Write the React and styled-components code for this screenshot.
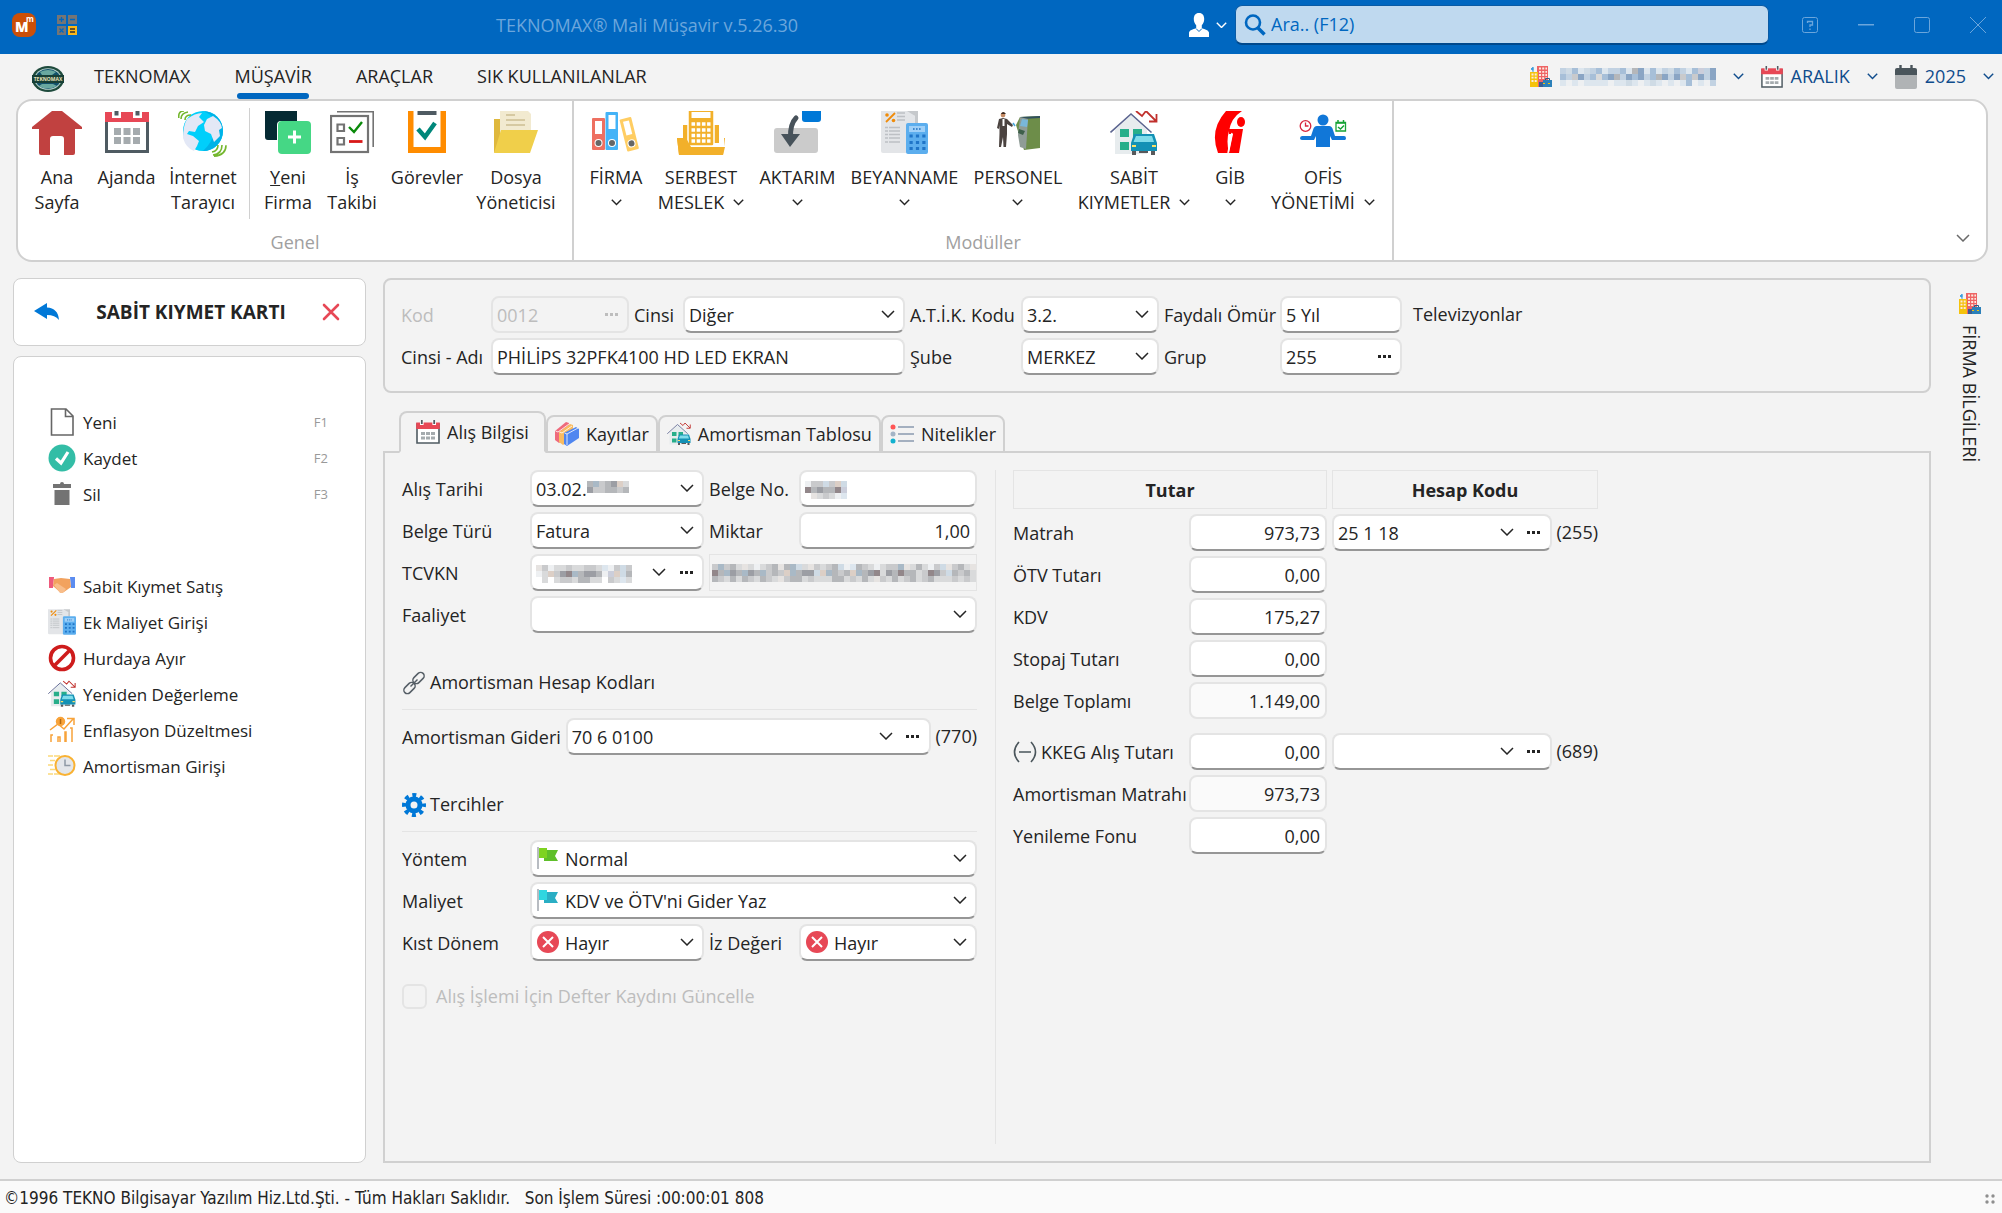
import React, { useState } from "react";
import styled, { createGlobalStyle, css } from "styled-components";

const color = {
    blue: "#0067c0",
    navy: "#0f4c8c",
    text: "#242424",
    muted: "#a0a0a0",
    disabled: "#bdbdbd",
    border: "#d0d0d0",
    soft: "#e4e4e4",
    bg: "#f3f3f3",
    white: "#ffffff",
    red: "#e74856",
};

const GlobalStyle = createGlobalStyle`
    * {
        box-sizing: border-box;
    }

    body {
        margin: 0;
        background: ${color.bg};
        color: ${color.text};
        font-family: "Open Sans", "Noto Sans", sans-serif;
        font-size: 18px;
        line-height: 25px;
    }

    button, input, select {
        margin: 0;
        padding: 0;
        border: none;
        background: none;
        color: inherit;
        font: inherit;
    }

    svg {
        display: block;
        flex: none;
    }
`;

/* ---------- icons ---------- */

const Chevron = ({ w = 14 }) => (
    <svg width={w} height={w * 0.6} viewBox="0 0 14 8.4" fill="none" stroke="currentColor" strokeWidth={w > 12 ? 1.5 : 1.8}>
        <path d="M1 1l6 6 6-6" />
    </svg>
);

const Dots = () => (
    <svg width="14" height="3" viewBox="0 0 14 3" fill="currentColor">
        <path d="M0 0h3v3H0zM5 0h3v3H5zM10 0h3v3h-3z" />
    </svg>
);

const AppLogo = () => (
    <svg width="24" height="24" viewBox="0 0 24 24">
        <rect width="24" height="24" rx="8" fill="#cb4f08" />
        <text x="3" y="19" fontSize="14" fontWeight="800" fill="#fff">M</text>
        <text x="14" y="9" fontSize="8" fontWeight="700" fill="#fff">m</text>
    </svg>
);

const CalcGrid = () => (
    <svg width="20" height="20" viewBox="0 0 20 20">
        <path fill="#757575" d="M0 0h9v9H0zM11 0h9v9h-9zM0 11h9v9H0z" />
        <path fill="#fbb616" d="M11 11h9v9h-9z" />
        <path stroke="#0067c0" strokeWidth="1.3" fill="none" d="M2 4.5h5M4.500 2v5M13 4.500h5M2.500 13.500l4 4M6.500 13.500l-4 4" />
        <path stroke="#333" strokeWidth="1.3" d="M13 14h5M13 17h5" />
    </svg>
);

const UserIcon = () => (
    <svg width="20" height="24" viewBox="0 0 20 24" fill="#fff">
        <path d="M10 0c3.600 0 5.200 2.600 5.200 6 0 2.600-1 5-2.400 6.200V15c1 1 6.200 1.200 7.200 4.500V24H0v-4.500C1 16.200 6.200 16 7.200 15v-2.800C5.800 11 4.800 8.600 4.800 6c0-3.400 1.600-6 5.200-6z" />
        <path d="M7 15.500l3 3 3-3" fill="none" stroke="#0067c0" strokeWidth="1" />
    </svg>
);

const SearchIcon = () => (
    <svg width="22" height="22" viewBox="0 0 22 22" fill="none" stroke="#0067c0">
        <circle cx="9" cy="8.500" r="7" strokeWidth="2.600" />
        <path d="M14 14l6.500 6.500" strokeWidth="3.600" />
    </svg>
);

const GlobeLogo = () => (
    <svg width="32" height="26" viewBox="0 0 32 26">
        <ellipse cx="16" cy="13" rx="16" ry="13" fill="#1e4a3c" />
        <ellipse cx="16" cy="13" rx="13.500" ry="10.800" fill="#b9d4cf" />
        <ellipse cx="16" cy="13" rx="12.500" ry="10" fill="#12516a" />
        <path d="M8 6q8-4 16 0l-4 3H10zM7 20q8 5 18 0l-4-2H10z" fill="#69a8a0" />
        <rect x="0" y="9" width="32" height="8" fill="#173f36" />
        <text x="16" y="15" fontSize="5" fontWeight="700" fill="#e8e2bc" textAnchor="middle">TEKNOMAX</text>
    </svg>
);

const BuildingIcon = () => (
    <svg width="22" height="22" viewBox="0 0 22 22">
        <path d="M7 0h11v21H7z" fill="#ee6465" />
        <path d="M0 6h8v15H0z" fill="#f5c20c" />
        <path d="M3 6V1M3 1.500l-2 1.500 2 1.200z" stroke="#3b9ddd" fill="#3b9ddd" />
        <path stroke="#fbe9df" strokeWidth="1.800" strokeDasharray="2 1.200" d="M9 2.500h8M9 5.800h8M9 9h8M9 12.200h8M1.500 8.500h6M1.500 11.700h6M1.500 15h6" />
        <path d="M9 16h4v5H9z" fill="#3a5e94" />
        <path d="M13 14h9v7h-9z" fill="#2c80b9" />
        <path d="M13 17.500h9" stroke="#f5c20c" strokeDasharray="2 3" />
        <path d="M15.500 14v-1.500h4V14" stroke="#275b84" fill="none" />
    </svg>
);

const CalendarIcon = ({ w = 24, h = 24 }) => (
    <svg width={w} height={h} viewBox="0 0 24 24">
        <path d="M1 4h22v19H1z" fill="#fff" stroke="#4f5b62" strokeWidth="1.600" />
        <path d="M.2 2.500h23.600V9H.2z" fill={color.red} />
        <path d="M4 0h3.600v5H4zM16.400 0H20v5h-3.600z" fill="#fff" />
        <path d="M5.800 0v4M18.200 0v4" stroke="#4f5b62" strokeWidth="1.800" />
        <path fill="#a5abae" d="M5 12h4v3H5zM10 12h4v3h-4zM15 12h4v3h-4zM5 16.500h4v3H5zM10 16.500h4v3h-4zM15 16.500h4v3h-4z" />
    </svg>
);

const AgendaIcon = () => (
    <svg width="44" height="44" viewBox="0 0 44 44">
        <path d="M1.500 6h41v34.500h-41z" fill="#fff" stroke="#4f5b62" strokeWidth="3" />
        <path d="M0 1h44v10H0z" fill={color.red} />
        <path d="M7 0h9v7H7zM28 0h9v7h-9z" fill="#fff" />
        <path d="M11.500 0v4.500M32.500 0v4.500" stroke="#4f5b62" strokeWidth="4" />
        <path fill="#a5abae" d="M9 17h7v7H9zM18.500 17h7v7h-7zM28 17h7v7h-7zM9 26h7v7H9zM18.500 26h7v7h-7zM28 26h7v7h-7z" />
    </svg>
);

const DarkCalendarIcon = () => (
    <svg width="22" height="24" viewBox="0 0 22 24">
        <rect y="4" width="22" height="20" rx="2" fill="#b0b3b5" />
        <path d="M0 10V5q0-2 2-2h18q2 0 2 2v5z" fill="#4a555b" />
        <path d="M5.500 0v5M16.500 0v5" stroke="#4a555b" strokeWidth="2.400" />
    </svg>
);

const HomeIcon = () => (
    <svg width="50" height="44" viewBox="0 0 50 44">
        <path d="M20 0h10l20 16v2h-7v24q0 2-2 2h-9V28q0-3-3-3h-8q-3 0-3 3v16H9q-2 0-2-2V18H0v-2z" fill="#c14140" />
    </svg>
);

const InternetIcon = () => (
    <svg width="50" height="46" viewBox="0 0 50 46">
        <circle cx="25" cy="20" r="20" fill="#00cffb" />
        <path d="M25 0a20 20 0 0 1 0 40q10-9 12-22T25 0z" fill="#00b3e8" />
        <path
            d="M9 8q8-6 15-6l-3 4 5 5-6 4-3 6-6-1-2 3 6 2 6 5-2 5-3 5q-8-3-11-13 0-12 4-19zM29 8l6-3q8 5 9 12l-3 2 1 6-6 6-3-8-6-3-1-6z"
            fill="#e3e8f6"
        />
        <g fill="none" stroke="#74b72e" strokeWidth="1.600">
            <path d="M10 1q-7 1-7 7M6 0Q0 0 .8 7M13 4q-6 0-6 5" />
            <path d="M34 41q6-1 6-7M35 44q9-1 9-10M36 45.200q12-1 12-11" />
        </g>
    </svg>
);

const NewFirmIcon = () => (
    <svg width="46" height="44" viewBox="0 0 46 44">
        <path d="M0 0h32v10H16q-4 0-4 4v15H3q-3 0-3-3z" fill="#052a33" />
        <rect x="13" y="10" width="33" height="33" rx="4" fill="#45d785" />
        <path d="M29.500 19.500v13M23 26h13" stroke="#fff" strokeWidth="3" />
    </svg>
);

const TasksIcon = () => (
    <svg width="44" height="44" viewBox="0 0 44 44" fill="none">
        <path d="M7 .8h36.200V36" stroke="#737373" strokeWidth="1.600" />
        <rect x="1" y="5" width="37" height="36" stroke="#737373" strokeWidth="2.200" />
        <path d="M7.500 13.500h6.500v6.500H7.500zM7.500 27h6.500v6.500H7.500z" stroke="#737373" strokeWidth="2.200" />
        <path d="M19 16l5 5 8-10" stroke="#0a8a0a" strokeWidth="2.400" />
        <path d="M19 30.500h13.500" stroke="#d81818" strokeWidth="2.800" />
    </svg>
);

const ClipboardIcon = () => (
    <svg width="38" height="44" viewBox="0 0 38 44">
        <path d="M0 0h38v42H0z" fill="#ff8c00" />
        <path d="M5.500 0h27v36h-27z" fill="#fff" />
        <path d="M9.500 0h19v4h-19z" fill="#4f5b62" />
        <path d="M10 18l7 8 10-14" fill="none" stroke="#00877a" strokeWidth="4.500" />
    </svg>
);

const FolderIcon = () => (
    <svg width="44" height="44" viewBox="0 0 44 44">
        <path d="M0 8h10v20L0 42z" fill="#dfb83d" />
        <path d="M6 0h28l3 3v28L6 34z" fill="#f2ead0" />
        <path d="M12 4h9M12 9h19M12 14h19" stroke="#d6c9a2" strokeWidth="1.800" />
        <path d="M7 19h37l-8 23H0z" fill="#f0cf4a" />
    </svg>
);

const BindersIcon = () => (
    <svg width="48" height="44" viewBox="0 0 48 44">
        <rect x="0" y="7" width="13" height="32" rx="1" fill="#ee7061" />
        <rect x="13.500" y="1" width="12.500" height="38" rx="1" fill="#44b3f7" />
        <g transform="rotate(-14 40 22)">
            <rect x="31" y="6" width="12" height="33" rx="1" fill="#ffcd62" />
            <rect x="34" y="9" width="6" height="14" fill="#fff" />
            <circle cx="37" cy="32" r="4" fill="#fff" />
            <circle cx="37" cy="32" r="3" fill="#666" />
        </g>
        <path d="M3 10h7v13H3zM16.500 4h7v14h-7z" fill="#fff" />
        <circle cx="6.500" cy="32" r="4" fill="#fff" />
        <circle cx="6.500" cy="32" r="3" fill="#666" />
        <circle cx="20" cy="32" r="4" fill="#fff" />
        <circle cx="20" cy="32" r="3" fill="#666" />
    </svg>
);

const CashIcon = () => (
    <svg width="48" height="44" viewBox="0 0 48 44">
        <path d="M6 14h36v18H6zM0 27h9l5 9h33V27h1l-2 17H2z" fill="#f2b02a" />
        <rect x="11" y="-3" width="26" height="38" rx="2" fill="#f2b02a" stroke="#fff" strokeWidth="1.500" />
        <path d="M14.500 1h19v6h-19z" fill="#fff" />
        <path stroke="#fff" strokeWidth="3.600" strokeDasharray="3.600 1.600" d="M14.500 13h19M14.500 19h19M14.500 24.500h19M14.500 30h19" />
        <path d="M0 27h9l5 9h34l-2 8H2z" fill="#f2b02a" />
    </svg>
);

const TransferIcon = () => (
    <svg width="48" height="44" viewBox="0 0 48 44">
        <rect x="0" y="17" width="44" height="25" rx="3" fill="#cbcbcb" />
        <path d="M28 0h19v8q0 3-3 3H31q-3 0-3-3z" fill="#0078d7" />
        <path d="M22 7q-6 6-5.500 20" fill="none" stroke="#47525a" strokeWidth="5" strokeLinecap="round" />
        <path d="M7 23h19L16 36z" fill="#47525a" />
    </svg>
);

const DocCalcIcon = ({ w = 47, h = 43 }) => (
    <svg width={w} height={h} viewBox="0 0 47 43">
        <path d="M0 0h28l9 8v34H2q-2 0-2-2z" fill="#e3e5e8" />
        <path d="M26 0h11v12H34V5z" fill="#c6c9cc" />
        <path d="M5 11l9-9" stroke="#f08c0a" strokeWidth="1.800" />
        <circle cx="6" cy="4" r="1.800" fill="#f08c0a" />
        <circle cx="12.500" cy="9.500" r="1.800" fill="#f08c0a" />
        <path d="M16 2h8M16 5.500h8M16 9h8M8 16.500h11M8 20h11M8 23.500h11M8 27h11M8 31h11M4 16.500h3M4 20h3M4 23.500h3M4 27h3M4 31h3" stroke="#bdc0c4" strokeWidth="1.400" />
        <rect x="25" y="12" width="22" height="31" rx="2" fill="#5caeee" />
        <path d="M28 15h16v6H28z" fill="#9fd0f8" />
        <path d="M32 18h8" stroke="#1f6fbe" strokeWidth="1.600" strokeDasharray="1.600 1.400" />
        <path stroke="#1f75c8" strokeWidth="3" strokeDasharray="3.200 3.200" d="M28.500 25h16M28.500 31.500h16M28.500 37.500h16" />
    </svg>
);

const PersonnelIcon = () => (
    <svg width="44" height="44" viewBox="0 0 44 44">
        <path d="M20 14l4-8 20-1v32l-16 2z" fill="#6d8d49" />
        <path d="M24 6l20-1v2l-17 1z" fill="#31505e" />
        <path d="M24 6l8 2-2 30-6-2-2-12z" fill="#8f9c96" />
        <path d="M26 8l6 1-1 7-7-1z" fill="#79b7da" />
        <path d="M23 18l6 2-2 4-5-2z" fill="#3e5f4a" />
        <circle cx="7" cy="4" r="2.400" fill="#c58a63" />
        <path d="M5 3q2-4 5 0z" fill="#3b2a20" />
        <path d="M3 8l4-1 4 1 6 6-1 2-5-3v10l-1 13H7.500L7 26l-2 10H3l.500-14V14L3 18 1 17z" fill="#4b4340" />
        <path d="M6.500 8h2v7h-2z" fill="#fff" />
        <path d="M17 12l2 3" stroke="#45a7dd" strokeWidth="1.500" />
    </svg>
);

const HouseCarIcon = ({ w = 48, h = 44 }) => (
    <svg width={w} height={h} viewBox="0 0 48 44" fill="none">
        <path d="M5 19L21 4l16 15v24H5z" fill="#e7ecee" />
        <path d="M.5 21.500L21 3l20.500 18.500" stroke="#5c6590" strokeWidth="1.600" />
        <path d="M10 18h9v8h-9zM23 18h9v8h-9zM10 31h9v8h-9z" fill="#27ae8a" />
        <path d="M26 0l6 5 4-5 10 10M46.500 3v7.500H39" stroke="#c0302c" strokeWidth="1.800" />
        <path d="M22 40h4v4h-4zM41 40h4v4h-4zM29 40h9v2h-9z" fill="#58595b" />
        <path d="M24 23h20l3 9v8H21v-8z" fill="#1391b5" />
        <path d="M26 25h16l2 6H23.500z" fill="#80dcea" />
        <path d="M22 35h4M42 35h4" stroke="#fbe26a" strokeWidth="2" />
    </svg>
);

const GibIcon = () => (
    <svg width="32" height="44" viewBox="0 0 32 44" fill="#f00">
        <path d="M12 0h16Q17 7 15 20q-3 10 0 22H4Q-5 19 12 0z" />
        <path d="M15 18h14l-4 24H15l4-19h-4z" />
        <path d="M14 42l4-20" stroke="#fff" strokeWidth="1.500" />
        <ellipse cx="27" cy="11" rx="4" ry="5" />
    </svg>
);

const OfficeIcon = () => (
    <svg width="48" height="44" viewBox="0 0 48 44">
        <circle cx="24" cy="9" r="5.500" fill="#1177d8" />
        <path d="M18 15h12q3 0 4 4l2 6h9q2 0 2 2.300T45 29H33l-2-4v11H17V25l-2 4H3q-2 0-2-1.700T3 25h9l2-6q1-4 4-4z" fill="#1177d8" />
        <circle cx="6.500" cy="15" r="5.300" fill="#fff" stroke="#d7263d" strokeWidth="1.300" />
        <path d="M6.500 11.500V15h3" fill="none" stroke="#d7263d" strokeWidth="1.300" />
        <path d="M37 11.500h9.500v8.500H37z" fill="#fff" stroke="#16a335" strokeWidth="1.300" />
        <path d="M37 12h9.500M39 9v3M44.500 9v3M39 16l2.500 2 3.500-3.500" fill="none" stroke="#16a335" strokeWidth="1.500" />
    </svg>
);

const BackIcon = () => (
    <svg width="26" height="18" viewBox="0 0 26 18">
        <path d="M13 0v4.500Q24 5 25 17q-4-5-12-5v4L0 8z" fill="#0078d7" />
    </svg>
);

const CloseIcon = () => (
    <svg width="18" height="18" viewBox="0 0 18 18" fill="none" stroke={color.red} strokeWidth="2.600" strokeLinecap="round">
        <path d="M2 2l14 14M16 2L2 16" />
    </svg>
);

const PageIcon = () => (
    <svg width="28" height="28" viewBox="0 0 28 28" fill="none" stroke="#666" strokeWidth="1.600">
        <path d="M3.500 1H18l7 7v19H3.500zM17.500 1v7.500H25" />
    </svg>
);

const SaveIcon = () => (
    <svg width="28" height="28" viewBox="0 0 28 28">
        <circle cx="14" cy="14" r="13.500" fill="#33bda6" />
        <path d="M8 14.500l5 4.500 7-11" fill="none" stroke="#fff" strokeWidth="3.200" />
    </svg>
);

const TrashIcon = () => (
    <svg width="28" height="28" viewBox="0 0 28 28" fill="#737373">
        <path d="M5 4h7q0-2 2-2t2 2h7v4H5zM6.500 10h15v15h-15z" />
    </svg>
);

const HandshakeIcon = () => (
    <svg width="28" height="28" viewBox="0 0 28 28">
        <path d="M1 5h5l-1 11H1z" fill="#ee5a7c" />
        <path d="M22 5h5v11h-4z" fill="#5b8cf0" />
        <path d="M6 7l7-1 9 1 1 8-7 5-3 1-8-7z" fill="#f2a25e" />
        <path d="M6 13l3-2 9 6-3 4h-3z" fill="#f8bd8a" />
    </svg>
);

const BanIcon = () => (
    <svg width="28" height="28" viewBox="0 0 28 28" fill="none" stroke="#ce1c1c" strokeWidth="3.600">
        <circle cx="14" cy="14" r="11.500" />
        <path d="M22 6L6 22" />
    </svg>
);

const InflationIcon = () => (
    <svg width="28" height="28" viewBox="0 0 28 28" fill="none" stroke="#f8a33a" strokeWidth="1.500">
        <path d="M2 14l8-6 6 5 9-10M19 2.500h7V9M3 26v-7h2M10 26v-5h2v5M17 26V16h1v10M24 26V12h-2" />
        <circle cx="12.500" cy="5.500" r="4" fill="#f8a33a" />
        <path d="M12.500 3v5" stroke="#b16a12" />
    </svg>
);

const ClockIcon = () => (
    <svg width="28" height="28" viewBox="0 0 28 28" fill="none">
        <path d="M0 4h12M2 8.500h7M0 13h6M2 17.500h6M0 22h12" stroke="#fbd97a" strokeWidth="1.500" strokeDasharray="5 1 9 1" />
        <circle cx="17" cy="13.500" r="9.500" fill="#e3e6ea" stroke="#f9b233" strokeWidth="2" />
        <path d="M17 7.500v6h5.500" stroke="#8f99a5" strokeWidth="1.500" />
    </svg>
);

const BooksIcon = () => (
    <svg width="24" height="24" viewBox="0 0 24 24">
        <path d="M0 9L11 0l3 1v13L4 21l-4-3z" fill="#ef6a7c" />
        <path d="M4 10L15 2l3 1v13L8 23l-4-3z" fill="#f9bc62" />
        <path d="M9 11l12-6 3 2v9l-12 8-3-2z" fill="#4f86f0" />
        <path d="M9.500 11l2.500 1v11M4.500 10L7 11M.5 9L3 10l11-8M7 11l10-7M12 12l11-6" stroke="#fff" strokeWidth=".8" fill="none" />
    </svg>
);

const ListIcon = () => (
    <svg width="24" height="20" viewBox="0 0 24 20">
        <circle cx="3" cy="3" r="2.500" fill="#f55" />
        <circle cx="3" cy="10" r="2.500" fill="#a3b4c6" />
        <circle cx="3" cy="17" r="2.500" fill="#12b1cf" />
        <path d="M8 3h16M8 10h16M8 17h16" stroke="#8a9bb0" strokeWidth="1.300" />
    </svg>
);

const LinkIcon = () => (
    <svg width="24" height="24" viewBox="0 0 24 24" fill="none" stroke="#555e66" strokeWidth="1.500">
        <rect x="10" y="3.500" width="13" height="7" rx="3.500" transform="rotate(-45 16.500 7)" />
        <rect x="1" y="13.500" width="13" height="7" rx="3.500" transform="rotate(-45 7.500 17)" />
        <path d="M8.500 15.500l7-7" />
    </svg>
);

const GearIcon = () => (
    <svg width="24" height="24" viewBox="0 0 24 24" fill="none" stroke="#0078d7">
        <circle cx="12" cy="12" r="6" strokeWidth="5" />
        <circle cx="12" cy="12" r="10" strokeWidth="4" strokeDasharray="4 3.854" strokeDashoffset="2" />
    </svg>
);

const FlagIcon = ({ light, dark }) => (
    <svg width="22" height="22" viewBox="0 0 22 22">
        <path d="M1 0v22" stroke="#9aa0a8" strokeWidth="1.400" />
        <path d="M7 3h14l-3 6 3 5H7z" fill={dark} />
        <path d="M2 1h8v10H2z" fill={light} />
    </svg>
);

const NoIcon = () => (
    <svg width="22" height="22" viewBox="0 0 22 22">
        <circle cx="11" cy="11" r="11" fill={color.red} />
        <path d="M6 6l10 10M16 6L6 16" stroke="#fff" strokeWidth="2" />
    </svg>
);

const MinusParens = () => (
    <svg width="24" height="22" viewBox="0 0 24 22" fill="none" stroke="#4a555b" strokeWidth="1.600">
        <path d="M6 1q-9 10 0 20M18 1q9 10 0 20M6 11h12" />
    </svg>
);

/* redacted values: one letter is one cell of the mosaic */
const shades = {
    a: "#9c9ea4", b: "#b5b7ba", c: "#c9cacc", d: "#d9dadb", e: "#e6e3e1", f: "#eef0f2",
    g: "#a9b9c6", h: "#cfdbe5", i: "#dccfc6", j: "#92878a", k: "#cbcedb", l: "#8aa5c4",
    m: "#a7bfd8", n: "#c2d2e2", o: "#dde6ee", ".": "transparent",
};

const Mosaic = ({ rows }) => (
    <svg width={rows[0].length * 6} height="18" shapeRendering="crispEdges" aria-hidden="true">
        {rows.map((row, y) =>
            [...row].map((cell, x) => (
                <rect key={`${x}-${y}`} x={x * 6} y={y * 6} width="6" height="6" fill={shades[cell]} />
            ))
        )}
    </svg>
);

/* ---------- shell ---------- */

const Page = styled.div`
    display: flex;
    flex-direction: column;
    min-height: 100vh;
`;

const TitleBar = styled.header`
    display: flex;
    align-items: center;
    height: 54px;
    padding: 0 14px 4px 12px;
    background: ${color.blue};
    color: #6ba6dc;
`;

const AppIcons = styled.div`
    display: flex;
    align-items: center;
    gap: 21px;
    width: 484px;
`;

const AppTitle = styled.h1`
    flex: 1;
    margin: 0;
    font-size: 18px;
    font-weight: 400;
    white-space: pre;
`;

const UserMenu = styled.button`
    display: flex;
    align-items: center;
    gap: 7px;
    color: ${color.white};
    margin-right: 8px;
`;

const SearchBox = styled.label`
    display: flex;
    align-items: center;
    gap: 5px;
    width: 534px;
    height: 40px;
    padding: 0 8px;
    border: 1px solid #0a5ba5;
    border-bottom: 2px solid #00498c;
    border-radius: 7px;
    background: #bfd9ef;

    input {
        flex: 1;
        outline: none;
        color: ${color.blue};
    }

    input::placeholder {
        color: ${color.blue};
        opacity: 1;
    }
`;

const WindowButtons = styled.div`
    display: flex;
    gap: 36px;
    margin-left: 31px;

    button {
        display: grid;
        place-items: center;
        width: 20px;
        height: 20px;
    }
`;

const MenuRow = styled.nav`
    display: flex;
    align-items: stretch;
    height: 45px;
    padding: 0 8px 0 32px;
`;

const LogoLink = styled.a`
    display: flex;
    align-items: center;
    padding-top: 4px;
    margin-right: 8px;
`;

const MenuTab = styled.a`
    position: relative;
    padding: 10px 22px 0;
    color: inherit;
    text-decoration: none;

    ${(props) =>
        props.$active &&
        css`
            &::after {
                content: "";
                position: absolute;
                left: 25px;
                right: 25px;
                bottom: 0;
                height: 6px;
                border-radius: 3px;
                background: ${color.blue};
            }
        `}
`;

const PeriodPickers = styled.div`
    display: flex;
    align-items: center;
    gap: 17px;
    margin-left: auto;
    color: ${color.navy};
`;

const Picker = styled.button`
    display: flex;
    align-items: center;
    gap: 8px;

    > :last-child {
        margin-left: 9px;
    }
`;

const Ribbon = styled.section`
    position: relative;
    display: flex;
    height: 163px;
    margin: 0 14px 0 16px;
    border: 2px solid ${color.border};
    border-radius: 16px;
    background: ${color.white};
`;

const RibbonGroup = styled.div`
    display: flex;
    flex-direction: column;
    justify-content: space-between;
    padding: 7px 8px 5px;
    border-right: 2px solid ${color.border};
    text-align: center;
`;

const RibbonItems = styled.div`
    display: flex;
`;

const RibbonButton = styled.button`
    display: flex;
    flex-direction: column;
    align-items: center;
    gap: 10px;
    width: ${(props) => props.$width}px;
    padding-top: 3px;
    white-space: nowrap;
`;

const RibbonIcon = styled.span`
    display: grid;
    align-items: start;
    height: 44px;
`;

const RibbonText = styled.span`
    display: flex;
    flex-direction: column;
    align-items: center;
    height: 50px;
`;

const RibbonLine = styled.span`
    display: flex;
    align-items: center;
    gap: 9px;
    height: 25px;
`;

const RibbonSeparator = styled.span`
    width: 1px;
    height: 111px;
    margin: 0 8px;
    background: ${color.border};
`;

const GroupName = styled.span`
    color: ${color.muted};
`;

const RibbonToggle = styled.button`
    position: absolute;
    right: 16px;
    bottom: 18px;
    color: #6a6a6a;
`;

const Body = styled.div`
    display: flex;
    flex: 1;
    padding: 16px 0 16px 13px;
`;

const Footer = styled.footer`
    display: flex;
    align-items: center;
    justify-content: space-between;
    height: 34px;
    padding: 3px 6px 0 4px;
    border-top: 2px solid ${color.border};
    background: #fafafa;
    font-family: "DejaVu Sans Condensed", "Noto Sans", sans-serif;
    font-size: 17px;

    span {
        white-space: pre;
    }
`;

/* ---------- left panel ---------- */

const Aside = styled.aside`
    display: flex;
    flex-direction: column;
    gap: 10px;
    width: 353px;
    margin-right: 17px;
`;

const Card = styled.div`
    border: 1px solid ${color.border};
    border-radius: 8px;
    background: ${color.white};
`;

const CardTitle = styled(Card)`
    display: flex;
    align-items: center;
    justify-content: space-between;
    height: 68px;
    padding: 0 25px 0 20px;

    h2 {
        margin: 0;
        font-size: 19px;
    }
`;

const ActionCard = styled(Card)`
    flex: 1;
    padding: 47px 37px 0 34px;
`;

const ActionList = styled.ul`
    margin: 0 0 56px;
    padding: 0;
    list-style: none;
`;

const Action = styled.button`
    display: flex;
    align-items: center;
    gap: 7px;
    width: 100%;
    height: 36px;
    font-size: 17px;
    text-align: left;

    kbd {
        margin-left: auto;
        color: #999;
        font-family: inherit;
        font-size: 13px;
    }
`;

/* ---------- form ---------- */

const Main = styled.main`
    display: flex;
    flex-direction: column;
    flex: 1;
`;

const HeaderForm = styled.form`
    display: grid;
    grid-template-columns: 85px 138px 44px 222px 106px 138px 111px 122px auto;
    gap: 5px;
    align-items: center;
    padding: 16px;
    border: 2px solid ${color.border};
    border-radius: 8px;
`;

const Label = styled.label`
    display: flex;
    align-items: center;
    gap: 4px;
    padding-top: 1px;
    white-space: nowrap;
    color: ${(props) => (props.$muted ? color.disabled : "inherit")};
`;

const Hint = styled.span`
    padding-left: 6px;
`;

const span = css`
    grid-column: span ${(props) => props.$span || 1};
`;

const FieldBox = styled.div`
    ${span}
    position: relative;
    display: flex;
    align-items: center;
    flex: 1;
    min-width: 0;
    height: 37px;
    border: 2px solid ${color.soft};
    border-bottom-color: #969696;
    border-radius: 8px;
    background: ${color.white};

    ${(props) =>
        props.$flat &&
        css`
            border-bottom-color: ${color.soft};
            background: #fafafa;
        `}

    ${(props) =>
        props.$muted &&
        css`
            background: transparent;
            color: ${color.disabled};
        `}

    input,
    select {
        flex: 1;
        width: 100%;
        min-width: 0;
        height: 100%;
        padding: 1px 5px 0 ${(props) => (props.$icon ? 33 : 4)}px;
        appearance: none;
        outline: none;
        opacity: 1;
        text-align: ${(props) => (props.$right ? "right" : "left")};
    }
`;

const LeadIcon = styled.span`
    position: absolute;
    left: 5px;
    top: 5px;
    pointer-events: none;
`;

const Redacted = styled.span`
    position: absolute;
    left: ${(props) => props.$left}px;
    top: 9px;
    pointer-events: none;
`;

const Arrow = styled.span`
    position: absolute;
    right: ${(props) => (props.$shift ? 36 : 8)}px;
    top: 12px;
    pointer-events: none;
`;

const More = styled.button`
    display: grid;
    place-items: center;
    width: 31px;
    height: 100%;
`;

const CompanyBox = styled.output`
    grid-column: span 2;
    display: flex;
    align-items: center;
    height: 37px;
    padding-left: 2px;
    border: 1px solid ${color.soft};
    overflow: hidden;
`;

const Tabs = styled.div`
    display: flex;
    align-items: flex-end;
    height: 60px;
    margin-bottom: -2px;
    padding-left: 16px;
`;

const Tab = styled.button`
    display: flex;
    align-items: center;
    gap: 7px;
    height: ${(props) => (props.$active ? 42 : 38)}px;
    padding: 0 ${(props) => (props.$active ? 15 : 7)}px;
    border: 2px solid ${color.border};
    border-radius: 8px 8px 0 0;
    white-space: nowrap;

    ${(props) =>
        props.$active &&
        css`
            position: relative;
            z-index: 1;
            border-bottom-color: ${color.bg};
            background: ${color.bg};
        `}
`;

const Panel = styled.section`
    display: flex;
    flex: 1;
    padding: 17px;
    border: 2px solid ${color.border};
`;

const Column = styled.form`
    padding-right: 18px;
    border-right: 1px solid ${color.soft};
`;

const PurchaseGrid = styled.div`
    display: grid;
    grid-template-columns: 123px 174px 85px 178px;
    gap: 5px;
`;

const SectionTitle = styled.h3`
    display: flex;
    align-items: center;
    gap: 4px;
    height: 47px;
    margin: 30px 0 8px;
    padding-bottom: 7px;
    border-bottom: 1px solid ${color.soft};
    font-size: 18px;
    font-weight: 400;
`;

const Line = styled.div`
    display: flex;
    align-items: center;
    gap: 5px;
`;

const CheckLabel = styled.label`
    display: flex;
    align-items: center;
    gap: 9px;
    margin-top: 23px;
    color: ${color.disabled};

    input {
        width: 25px;
        height: 25px;
        border: 2px solid ${color.soft};
        border-radius: 6px;
        appearance: none;
    }
`;

const AmountGrid = styled.form`
    display: grid;
    grid-template-columns: 171px 138px 266px;
    gap: 5px;
    align-content: start;
    padding-left: 17px;
`;

const HeadCell = styled.div`
    ${span}
    height: 39px;
    padding-top: 7px;
    border: 1px solid ${color.soft};
    font-weight: 700;
    text-align: center;
`;

const Spacer = styled.div`
    grid-column: 1 / -1;
    height: 4px;
`;

const AccountCell = styled(Line)`
    grid-column: 3;
`;

const Rail = styled.aside`
    width: 71px;
    padding: 15px 0 0 26px;
`;

const RailButton = styled.button`
    display: flex;
    flex-direction: column;
    align-items: center;
    gap: 10px;

    span {
        writing-mode: vertical-rl;
    }
`;

/* ---------- parts ---------- */

const Field = ({ id, value, options, icon, more, redacted, redactedLeft = 4, muted, readOnly, right, colSpan, label }) => (
    <FieldBox $span={colSpan} $icon={!!icon} $flat={readOnly || muted} $muted={muted} $right={right}>
        {options ? (
            <select id={id} aria-label={label} defaultValue={options[0]}>
                {options.map((option) => (
                    <option key={option}>{option}</option>
                ))}
            </select>
        ) : (
            <input id={id} aria-label={label} defaultValue={value} disabled={muted} readOnly={readOnly} />
        )}
        {icon && <LeadIcon>{icon}</LeadIcon>}
        {redacted && (
            <Redacted $left={redactedLeft}>
                <Mosaic rows={redacted} />
            </Redacted>
        )}
        {options && (
            <Arrow $shift={more}>
                <Chevron />
            </Arrow>
        )}
        {more && (
            <More type="button" disabled={muted} aria-label="Seç">
                <Dots />
            </More>
        )}
    </FieldBox>
);

const general = [
    { icon: <HomeIcon />, lines: ["Ana", "Sayfa"], width: 62 },
    { icon: <AgendaIcon />, lines: ["Ajanda"], width: 77 },
    { icon: <InternetIcon />, lines: ["İnternet", "Tarayıcı"], width: 76 },
    null,
    { icon: <NewFirmIcon />, lines: [<span><u>Y</u>eni</span>, "Firma"], width: 60 },
    { icon: <TasksIcon />, lines: ["İş", "Takibi"], width: 68 },
    { icon: <ClipboardIcon />, lines: ["Görevler"], width: 82 },
    { icon: <FolderIcon />, lines: ["Dosya", "Yöneticisi"], width: 96 },
];

const modules = [
    { icon: <BindersIcon />, lines: ["FİRMA", ""], width: 68 },
    { icon: <CashIcon />, lines: ["SERBEST", "MESLEK"], width: 102 },
    { icon: <TransferIcon />, lines: ["AKTARIM", ""], width: 91 },
    { icon: <DocCalcIcon />, lines: ["BEYANNAME", ""], width: 123 },
    { icon: <PersonnelIcon />, lines: ["PERSONEL", ""], width: 104 },
    { icon: <HouseCarIcon />, lines: ["SABİT", "KIYMETLER"], width: 128 },
    { icon: <GibIcon />, lines: ["GİB", ""], width: 64 },
    { icon: <OfficeIcon />, lines: ["OFİS", "YÖNETİMİ"], width: 122 },
];

const RibbonSection = ({ name, items, menu }) => (
    <RibbonGroup>
        <RibbonItems>
            {items.map((item, i) =>
                item ? (
                    <RibbonButton key={i} type="button" $width={item.width}>
                        <RibbonIcon>{item.icon}</RibbonIcon>
                        <RibbonText>
                            {item.lines.map((line, n) => (
                                <RibbonLine key={n}>
                                    {line}
                                    {menu && n === 1 && <Chevron w={11} />}
                                </RibbonLine>
                            ))}
                        </RibbonText>
                    </RibbonButton>
                ) : (
                    <RibbonSeparator key={i} />
                )
            )}
        </RibbonItems>
        <GroupName>{name}</GroupName>
    </RibbonGroup>
);

const fileActions = [
    { icon: <PageIcon />, text: "Yeni", shortcut: "F1" },
    { icon: <SaveIcon />, text: "Kaydet", shortcut: "F2" },
    { icon: <TrashIcon />, text: "Sil", shortcut: "F3" },
];

const assetActions = [
    { icon: <HandshakeIcon />, text: "Sabit Kıymet Satış" },
    { icon: <DocCalcIcon w={28} h={28} />, text: "Ek Maliyet Girişi" },
    { icon: <BanIcon />, text: "Hurdaya Ayır" },
    { icon: <HouseCarIcon w={28} h={28} />, text: "Yeniden Değerleme" },
    { icon: <InflationIcon />, text: "Enflasyon Düzeltmesi" },
    { icon: <ClockIcon />, text: "Amortisman Girişi" },
];

const Actions = ({ items }) => (
    <ActionList>
        {items.map(({ icon, text, shortcut }) => (
            <li key={text}>
                <Action type="button">
                    {icon}
                    {text}
                    {shortcut && <kbd>{shortcut}</kbd>}
                </Action>
            </li>
        ))}
    </ActionList>
);

const tabs = [
    { icon: <CalendarIcon />, text: "Alış Bilgisi" },
    { icon: <BooksIcon />, text: "Kayıtlar" },
    { icon: <HouseCarIcon w={24} h={24} />, text: "Amortisman Tablosu" },
    { icon: <ListIcon />, text: "Nitelikler" },
];

const amounts = [
    { id: "matrah", label: "Matrah", value: "973,73", account: "25 1 18", code: "(255)" },
    { id: "otv", label: "ÖTV Tutarı", value: "0,00" },
    { id: "kdv", label: "KDV", value: "175,27" },
    { id: "stopaj", label: "Stopaj Tutarı", value: "0,00" },
    { id: "toplam", label: "Belge Toplamı", value: "1.149,00", readOnly: true },
    null,
    { id: "kkeg", label: "KKEG Alış Tutarı", value: "0,00", account: "", code: "(689)", icon: <MinusParens /> },
    { id: "amortisman-matrahi", label: "Amortisman Matrahı", value: "973,73", readOnly: true },
    { id: "fon", label: "Yenileme Fonu", value: "0,00" },
];

const App = () => {
    const [tab, setTab] = useState("Alış Bilgisi");

    return (
        <Page>
            <GlobalStyle />
            <TitleBar>
                <AppIcons>
                    <AppLogo />
                    <CalcGrid />
                </AppIcons>
                <AppTitle>TEKNOMAX® Mali Müşavir v.5.26.30</AppTitle>
                <UserMenu type="button" aria-label="Kullanıcı">
                    <UserIcon />
                    <Chevron w={11} />
                </UserMenu>
                <SearchBox>
                    <SearchIcon />
                    <input type="text" placeholder="Ara.. (F12)" aria-label="Ara" />
                </SearchBox>
                <WindowButtons>
                    <button type="button" aria-label="Yardım">
                        <svg width="16" height="16" viewBox="0 0 16 16" fill="none" stroke="currentColor">
                            <rect x=".5" y=".5" width="15" height="15" rx="2" />
                            <path d="M5.500 6V4.500h5v3.500H8v2M8 11.500v1.500" strokeWidth="1.300" />
                        </svg>
                    </button>
                    <button type="button" aria-label="Küçült">
                        <svg width="16" height="2" viewBox="0 0 16 2" fill="currentColor">
                            <path d="M0 0h16v1.500H0z" />
                        </svg>
                    </button>
                    <button type="button" aria-label="Büyüt">
                        <svg width="16" height="16" viewBox="0 0 16 16" fill="none" stroke="currentColor">
                            <rect x=".5" y=".5" width="15" height="15" rx="2" />
                        </svg>
                    </button>
                    <button type="button" aria-label="Kapat">
                        <svg width="16" height="16" viewBox="0 0 16 16" fill="none" stroke="currentColor">
                            <path d="M0 0l16 16M16 0L0 16" />
                        </svg>
                    </button>
                </WindowButtons>
            </TitleBar>

            <MenuRow>
                <LogoLink href="#" aria-label="Teknomax">
                    <GlobeLogo />
                </LogoLink>
                <MenuTab href="#">TEKNOMAX</MenuTab>
                <MenuTab href="#" $active>
                    MÜŞAVİR
                </MenuTab>
                <MenuTab href="#">ARAÇLAR</MenuTab>
                <MenuTab href="#">SIK KULLANILANLAR</MenuTab>
                <PeriodPickers>
                    <Picker type="button" aria-label="Firma">
                        <BuildingIcon />
                        <Mosaic rows={["nhmohnmonnmoblomonhmnomknl", "mnclnmdmlbnlmlnmblnlcmclnl", "ofofoooofoohofohofofomfofn"]} />
                        <Chevron w={11} />
                    </Picker>
                    <Picker type="button">
                        <CalendarIcon w={22} />
                        ARALIK
                        <Chevron w={11} />
                    </Picker>
                    <Picker type="button">
                        <DarkCalendarIcon />
                        2025
                        <Chevron w={11} />
                    </Picker>
                </PeriodPickers>
            </MenuRow>

            <Ribbon>
                <RibbonSection name="Genel" items={general} />
                <RibbonSection name="Modüller" items={modules} menu />
                <RibbonToggle type="button" aria-label="Şeridi daralt">
                    <Chevron />
                </RibbonToggle>
            </Ribbon>

            <Body>
                <Aside>
                    <CardTitle>
                        <button type="button" aria-label="Geri">
                            <BackIcon />
                        </button>
                        <h2>SABİT KIYMET KARTI</h2>
                        <button type="button" aria-label="Kapat">
                            <CloseIcon />
                        </button>
                    </CardTitle>
                    <ActionCard>
                        <Actions items={fileActions} />
                        <Actions items={assetActions} />
                    </ActionCard>
                </Aside>

                <Main>
                    <HeaderForm>
                        <Label htmlFor="kod" $muted>Kod</Label>
                        <Field id="kod" value="0012" muted more />
                        <Label htmlFor="cinsi">Cinsi</Label>
                        <Field id="cinsi" options={["Diğer"]} />
                        <Label htmlFor="atik">A.T.İ.K. Kodu</Label>
                        <Field id="atik" options={["3.2."]} />
                        <Label htmlFor="omur">Faydalı Ömür</Label>
                        <Field id="omur" value="5 Yıl" />
                        <Hint>Televizyonlar</Hint>
                        <Label htmlFor="adi">Cinsi - Adı</Label>
                        <Field id="adi" value="PHİLİPS 32PFK4100 HD LED EKRAN" colSpan={3} />
                        <Label htmlFor="sube">Şube</Label>
                        <Field id="sube" options={["MERKEZ"]} />
                        <Label htmlFor="grup">Grup</Label>
                        <Field id="grup" value="255" more />
                    </HeaderForm>

                    <Tabs role="tablist">
                        {tabs.map(({ icon, text }) => (
                            <Tab
                                key={text}
                                type="button"
                                role="tab"
                                aria-selected={tab === text}
                                $active={tab === text}
                                onClick={() => setTab(text)}>
                                {icon}
                                {text}
                            </Tab>
                        ))}
                    </Tabs>

                    <Panel>
                        <Column>
                            <PurchaseGrid>
                                <Label htmlFor="tarih">Alış Tarihi</Label>
                                <Field id="tarih" options={["03.02."]} redacted={["bgcbaid", "accbbcb"]} redactedLeft={55} />
                                <Label htmlFor="belge-no">Belge No.</Label>
                                <Field id="belge-no" value="" redacted={["fcchcih", "jbabbjk", ".edcdfo"]} />
                                <Label htmlFor="belge-turu">Belge Türü</Label>
                                <Field id="belge-turu" options={["Fatura"]} />
                                <Label htmlFor="miktar">Miktar</Label>
                                <Field id="miktar" value="1,00" right />
                                <Label htmlFor="tcvkn">TCVKN</Label>
                                <Field
                                    id="tcvkn"
                                    options={[""]}
                                    more
                                    redacted={["ecfddcddccdofchc", "fdicajgbaabfkihb", ".d.dccdbbdd.cdod"]}
                                />
                                <CompanyBox>
                                    <Mosaic
                                        rows={[
                                            "cgcbdedfdcbebghdecdcbhfobcdfdccgedbdfchecbde",
                                            "jbgabgabgcbcigbaahigbcbigbajdabjbbdcjachbcbd",
                                            "bcdbdbcdbcdecbbdcdddbbdcdbdecdbdcbdcbdddcdcd",
                                        ]}
                                    />
                                </CompanyBox>
                                <Label htmlFor="faaliyet">Faaliyet</Label>
                                <Field id="faaliyet" options={[""]} colSpan={3} />
                            </PurchaseGrid>

                            <SectionTitle>
                                <LinkIcon />
                                Amortisman Hesap Kodları
                            </SectionTitle>
                            <Line>
                                <Label htmlFor="gider">Amortisman Gideri</Label>
                                <Field id="gider" options={["70 6 0100"]} more />
                                <span>(770)</span>
                            </Line>

                            <SectionTitle>
                                <GearIcon />
                                Tercihler
                            </SectionTitle>
                            <PurchaseGrid>
                                <Label htmlFor="yontem">Yöntem</Label>
                                <Field id="yontem" options={["Normal"]} icon={<FlagIcon light="#7ed321" dark="#5fbf2a" />} colSpan={3} />
                                <Label htmlFor="maliyet">Maliyet</Label>
                                <Field
                                    id="maliyet"
                                    options={["KDV ve ÖTV'ni Gider Yaz"]}
                                    icon={<FlagIcon light="#2fd6e0" dark="#2aaec4" />}
                                    colSpan={3}
                                />
                                <Label htmlFor="kist">Kıst Dönem</Label>
                                <Field id="kist" options={["Hayır"]} icon={<NoIcon />} />
                                <Label htmlFor="iz">İz Değeri</Label>
                                <Field id="iz" options={["Hayır"]} icon={<NoIcon />} />
                            </PurchaseGrid>
                            <CheckLabel>
                                <input type="checkbox" disabled />
                                Alış İşlemi İçin Defter Kaydını Güncelle
                            </CheckLabel>
                        </Column>

                        <AmountGrid>
                            <HeadCell $span={2}>Tutar</HeadCell>
                            <HeadCell>Hesap Kodu</HeadCell>
                            {amounts.map((row, i) =>
                                row ? (
                                    <React.Fragment key={row.id}>
                                        <Label htmlFor={row.id}>
                                            {row.icon}
                                            {row.label}
                                        </Label>
                                        <Field id={row.id} value={row.value} readOnly={row.readOnly} right />
                                        <AccountCell>
                                            {row.code && (
                                                <>
                                                    <Field options={[row.account]} label={`${row.label} hesap kodu`} more />
                                                    <span>{row.code}</span>
                                                </>
                                            )}
                                        </AccountCell>
                                    </React.Fragment>
                                ) : (
                                    <Spacer key={i} />
                                )
                            )}
                        </AmountGrid>
                    </Panel>
                </Main>

                <Rail>
                    <RailButton type="button">
                        <BuildingIcon />
                        <span>FİRMA BİLGİLERİ</span>
                    </RailButton>
                </Rail>
            </Body>

            <Footer>
                <span>©1996 TEKNO Bilgisayar Yazılım Hiz.Ltd.Şti. - Tüm Hakları Saklıdır.   Son İşlem Süresi :00:00:01 808</span>
                <svg width="12" height="12" viewBox="0 0 12 12" fill="#8f8f8f">
                    <circle cx="3" cy="3" r="1.700" />
                    <circle cx="9" cy="3" r="1.700" />
                    <circle cx="3" cy="9" r="1.700" />
                    <circle cx="9" cy="9" r="1.700" />
                </svg>
            </Footer>
        </Page>
    );
};

export default App;
